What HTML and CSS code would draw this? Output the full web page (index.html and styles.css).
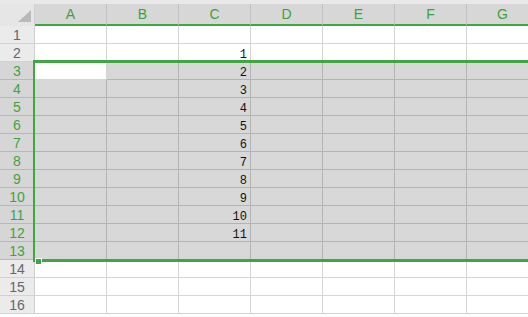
FILE: index.html
```html
<!DOCTYPE html>
<html lang="en">
<head>
    <meta charset="UTF-8">
    <title>Sheet</title>
    <link rel="stylesheet" href="styles.css">
</head>
<body>
    <div class="topbar"></div>

    <div class="sheet" id="sheet">
        <!-- header row -->
        <div class="corner">
            <svg width="13" height="12" viewBox="0 0 13 12"><polygon points="13,0 13,12 0,12" fill="#b9b9b9"/></svg>
        </div>
        <div class="col-head">A</div>
        <div class="col-head">B</div>
        <div class="col-head">C</div>
        <div class="col-head">D</div>
        <div class="col-head">E</div>
        <div class="col-head">F</div>
        <div class="col-head">G</div>

        <!-- selection box over rows 3-13 -->
        <div class="selection"></div>
        <div class="fill-handle"></div>
    </div>

    <script>
        const sheet = document.getElementById('sheet');
        const values = { 2: 1, 3: 2, 4: 3, 5: 4, 6: 5, 7: 6, 8: 7, 9: 8, 10: 9, 11: 10, 12: 11 };

        for (let r = 1; r <= 16; r++) {
            const selected = r >= 3 && r <= 13;
            const head = document.createElement('div');
            head.className = 'row-head' + (selected ? ' sel' : '');
            head.textContent = r;
            sheet.insertBefore(head, sheet.querySelector('.selection'));

            for (let c = 0; c < 7; c++) {
                const cell = document.createElement('div');
                cell.className = 'cell';
                if (selected && !(r === 3 && c === 0)) cell.classList.add('sel');
                if (c === 2 && values[r] !== undefined) cell.textContent = values[r];
                sheet.insertBefore(cell, sheet.querySelector('.selection'));
            }
        }
    </script>
</body>
</html>
```

FILE: styles.css
```css
body {
    margin: 0;
    overflow: hidden;
    font-family: "Liberation Sans", Arial, sans-serif;
    background: #fff;
}
.topbar {
    height: 4px;
    background: #e9e9e9;
}
.sheet {
    position: relative;
    display: grid;
    grid-template-columns: 35px repeat(7, 72px);
    grid-template-rows: 22px;
    grid-auto-rows: 18px;
    width: 539px;
}
.corner {
    box-sizing: border-box;
    background: #e6e6e6;
    border-right: 1px solid #d0d0d0;
    border-bottom: 2px solid #e6e6e6;
    display: flex;
    justify-content: flex-end;
    align-items: flex-end;
    padding: 0 3px 2px 0;
}
.col-head {
    box-sizing: border-box;
    background: #d7d7d7;
    border-right: 1px solid #c2c2c2;
    border-bottom: 2px solid #41a541;
    color: #3f9f3f;
    font-size: 14px;
    text-align: center;
    line-height: 20px;
}
.row-head {
    box-sizing: border-box;
    background: #ebebeb;
    border-right: 1px solid #cfcfcf;
    border-bottom: 1px solid #d2d2d2;
    color: #5f6770;
    font-size: 14px;
    text-align: center;
    line-height: 18px;
}
.row-head.sel {
    background: #d6d6d6;
    border-bottom-color: #b8b8b8;
    color: #3fa33f;
}
.cell {
    box-sizing: border-box;
    background: #fff;
    border-right: 1px solid #d4d4d4;
    border-bottom: 1px solid #d4d4d4;
    font-family: "Liberation Mono", "DejaVu Sans Mono", monospace;
    font-size: 12px;
    line-height: 16px;
    text-align: right;
    padding: 3px 3px 0 0;
    color: #111;
}
.cell.sel {
    background: #d8d8d8;
    border-right-color: #b3b3b3;
    border-bottom-color: #b3b3b3;
}
.selection {
    position: absolute;
    box-sizing: border-box;
    left: 33px;
    top: 56px;
    right: 0;
    height: 202px;
    border-top: 3px solid #41a541;
    border-bottom: 3px solid #41a541;
    border-left: 2px solid #41a541;
    pointer-events: none;
}
.fill-handle {
    position: absolute;
    left: 35px;
    top: 254px;
    width: 5px;
    height: 5px;
    background: #41a541;
    border: 1px solid #fff;
}
```
